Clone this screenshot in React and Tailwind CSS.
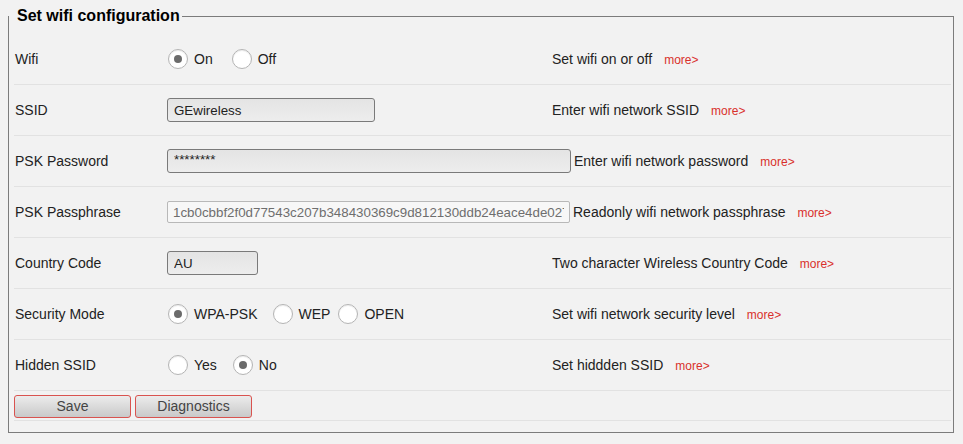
import React, { useState } from 'react';

const Radio = ({ checked, label, onClick }) => (
  <label onClick={onClick} className="flex items-center cursor-pointer">
    <span className="w-[20px] h-[20px] rounded-full border border-[#b4b4b4] bg-white flex items-center justify-center shadow-[inset_0_1px_1px_rgba(0,0,0,0.08)]">
      {checked && <span className="w-[8px] h-[8px] rounded-full bg-[#6b6b6b]" />}
    </span>
    <span className="ml-[6px]">{label}</span>
  </label>
);

const More = () => (
  <a className="ml-[12px] text-[12px] text-[#d9302c] cursor-pointer">more&gt;</a>
);

const Row = ({ label, children, desc, gap = false }) => (
  <div className="flex items-center h-[51px] border-b border-[#e2e2e2] pl-[1px]">
    <div className="w-[152px] shrink-0">{label}</div>
    <div className="min-w-[385px] flex items-center">{children}</div>
    <div className={`flex items-baseline ${gap ? 'ml-[3px]' : ''}`}>
      <span>{desc}</span>
      <More />
    </div>
  </div>
);

const inputCls =
  'h-[24px] rounded-[3px] border border-[#7a7a7a] bg-gradient-to-b from-[#e4e4e4] to-[#ededed] px-[6px] text-[13.33px] text-[#222] outline-none';

export default function App() {
  const [wifi, setWifi] = useState('on');
  const [mode, setMode] = useState('wpa');
  const [hidden, setHidden] = useState('no');

  return (
    <div className="min-h-[444px] w-full bg-[#f2f2f2] text-[14px] text-[#222] font-['Liberation_Sans',Arial,sans-serif] pt-[7px]">
      <fieldset className="ml-[8px] w-[946px] border border-[#7c7c7c] pb-[11px]">
        <legend className="pl-[8px] pr-[2px] text-[16px] font-bold text-black leading-[18px]">
          Set wifi configuration
        </legend>
        <div className="pt-[9px] pl-[5px] pr-[2px]">
          <Row label="Wifi" desc="Set wifi on or off">
            <span className="w-[1px]" />
            <Radio checked={wifi === 'on'} label="On" onClick={() => setWifi('on')} />
            <span className="w-[19px]" />
            <Radio checked={wifi === 'off'} label="Off" onClick={() => setWifi('off')} />
          </Row>
          <Row label="SSID" desc="Enter wifi network SSID">
            <input className={`${inputCls} w-[208px]`} defaultValue="GEwireless" />
          </Row>
          <Row label="PSK Password" desc="Enter wifi network password" gap>
            <input className={`${inputCls} w-[404px] text-[10px] pb-[4px]`} defaultValue="********" />
          </Row>
          <Row label="PSK Passphrase" desc="Readonly wifi network passphrase" gap>
            <input
              readOnly
              className="h-[22px] w-[403px] rounded-[2px] border border-[#b8b8b8] bg-[#f7f7f7] px-[5px] text-[13.33px] text-[#6e6e6e] outline-none"
              defaultValue="1cb0cbbf2f0d77543c207b348430369c9d812130ddb24eace4de027f8e1c3b2a"
            />
          </Row>
          <Row label="Country Code" desc="Two character Wireless Country Code">
            <input className={`${inputCls} w-[91px]`} defaultValue="AU" />
          </Row>
          <Row label="Security Mode" desc="Set wifi network security level">
            <span className="w-[1px]" />
            <Radio checked={mode === 'wpa'} label="WPA-PSK" onClick={() => setMode('wpa')} />
            <span className="w-[15px]" />
            <Radio checked={mode === 'wep'} label="WEP" onClick={() => setMode('wep')} />
            <span className="w-[8px]" />
            <Radio checked={mode === 'open'} label="OPEN" onClick={() => setMode('open')} />
          </Row>
          <Row label="Hidden SSID" desc="Set hiddden SSID">
            <span className="w-[1px]" />
            <Radio checked={hidden === 'yes'} label="Yes" onClick={() => setHidden('yes')} />
            <span className="w-[16px]" />
            <Radio checked={hidden === 'no'} label="No" onClick={() => setHidden('no')} />
          </Row>
          <div className="flex items-center gap-[4px] h-[30px] border-b border-[#e2e2e2] pt-[1px]">
            <button className="w-[117px] h-[23px] rounded-[3px] border border-[#d9534f] bg-gradient-to-b from-[#ececec] to-[#c9c9c9] text-[14px] text-[#444]">
              Save
            </button>
            <button className="w-[117px] h-[23px] rounded-[3px] border border-[#d9534f] bg-gradient-to-b from-[#ececec] to-[#c9c9c9] text-[14px] text-[#444]">
              Diagnostics
            </button>
          </div>
        </div>
      </fieldset>
    </div>
  );
}
